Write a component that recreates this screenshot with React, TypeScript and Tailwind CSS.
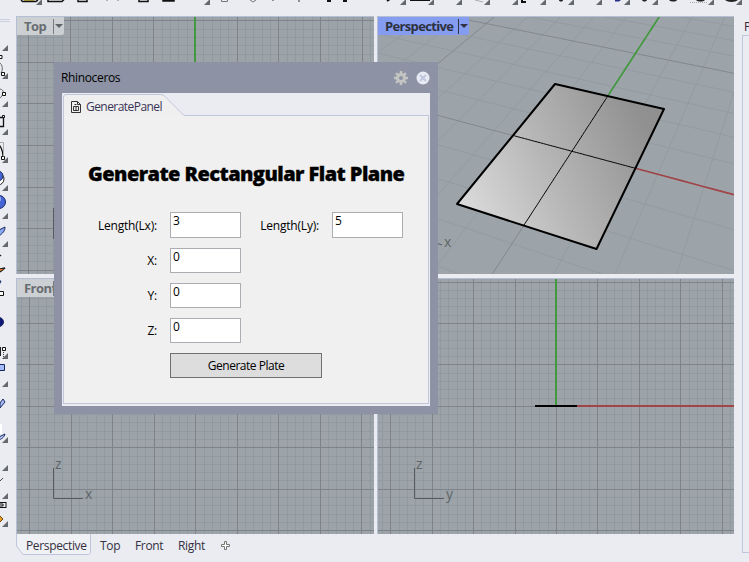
import React from "react";

const FONT = "font-['Open_Sans','Noto_Sans',sans-serif]";

/* ---------- orthographic grids ---------- */

type GridProps = { x0: number; y0: number; width: number; height: number; stepX?: number; stepY?: number };

// x0 / y0: position of one major line inside the viewport; five minor cells per major cell
function Grid({ x0, y0, width, height, stepX = 41.43, stepY = 41.43 }: GridProps) {
  const lines: React.ReactNode[] = [];
  const draw = (major: boolean) => {
    for (let i = -50; i < 100; i++) {
      if ((i % 5 === 0) !== major) continue;
      const x = Math.round(x0 + (i * stepX) / 5);
      const y = Math.round(y0 + (i * stepY) / 5);
      const fill = major ? "#7d8388" : "#92999f";
      if (x >= 0 && x < width) lines.push(<rect key={"x" + i} x={x} y={0} width={1} height={height} fill={fill} />);
      if (y >= 0 && y < height) lines.push(<rect key={"y" + i} x={0} y={y} width={width} height={1} fill={fill} />);
    }
  };
  draw(false);
  draw(true);
  return <g>{lines}</g>;
}

function AxisIcon({ x, y, up, right }: { x: number; y: number; up: string; right: string }) {
  return (
    <g fill="#5f6468" fontFamily="Open Sans, sans-serif" fontSize="14">
      <path d={`M${x + 0.5} ${y - 30}V${y + 0.5}H${x + 30}`} fill="none" stroke="#565b5f" />
      <text x={x + 2} y={y - 29}>{up}</text>
      <text x={x + 32} y={y + 1}>{right}</text>
    </g>
  );
}

/* ---------- perspective view ---------- */

type Pt = [number, number];
const corners: Pt[] = [[178, 68], [287, 93], [219.5, 233], [80, 188]];

// Projective map of the unit square onto the four corners
function project(u: number, v: number): [number, number, number] {
  const [[ax, ay], [bx, by], [cx, cy], [dx, dy]] = corners;
  const dx1 = bx - cx, dx2 = dx - cx, dx3 = ax - bx + cx - dx;
  const dy1 = by - cy, dy2 = dy - cy, dy3 = ay - by + cy - dy;
  const det = dx1 * dy2 - dx2 * dy1;
  const g = (dx3 * dy2 - dx2 * dy3) / det;
  const h = (dx1 * dy3 - dx3 * dy1) / det;
  const w = g * u + h * v + 1;
  return [
    ((bx - ax + g * bx) * u + (dx - ax + h * dx) * v + ax) / w,
    ((by - ay + g * by) * u + (dy - ay + h * dy) * v + ay) / w,
    w,
  ];
}

const world = (x: number, y: number) => project((x + 1.5) / 3, (2.5 - y) / 5);

function worldPath(x1: number, y1: number, x2: number, y2: number) {
  let d = "";
  for (let i = 0; i <= 80; i++) {
    const t = i / 80;
    const [px, py, w] = world(x1 + (x2 - x1) * t, y1 + (y2 - y1) * t);
    if (w > 0.1) d += `${d ? "L" : "M"}${px.toFixed(1)} ${py.toFixed(1)}`;
  }
  return d;
}

function PerspectiveDrawing() {
  const lines: React.ReactNode[] = [];
  for (let i = -20; i <= 20; i++) {
    const stroke = i % 5 === 0 ? "#7b8287" : "#91999e";
    lines.push(<path key={"a" + i} d={worldPath(i, -20, i, 20)} stroke={stroke} />);
    lines.push(<path key={"b" + i} d={worldPath(-20, i, 20, i)} stroke={stroke} />);
  }
  return (
    <svg width="358" height="259" className="-ml-px -mt-px block">
      <defs>
        <linearGradient id="plate" gradientUnits="userSpaceOnUse" x1="90" y1="195" x2="270" y2="110">
          <stop offset="0" stopColor="#dadada" />
          <stop offset="0.45" stopColor="#b7b7b7" />
          <stop offset="1" stopColor="#909090" />
        </linearGradient>
      </defs>
      <g fill="none" strokeWidth="0.8">{lines}</g>
      <path d={worldPath(0, 0, 0, 20)} stroke="#43993f" strokeWidth="1.7" fill="none" />
      <path d={worldPath(0, 0, 20, 0)} stroke="#a14549" strokeWidth="1.7" fill="none" />
      <polygon points={corners.map((c) => c.join(",")).join(" ")} fill="url(#plate)" stroke="#000" strokeWidth="2" strokeLinejoin="round" />
      <path d={worldPath(0, -2.5, 0, 2.5) + worldPath(-1.5, 0, 1.5, 0)} stroke="#000" strokeWidth="1" fill="none" />
      <path d="M59 227l6 2" stroke="#565b5f" />
      <text x="67" y="231" fill="#5f6468" fontFamily="Open Sans, sans-serif" fontSize="14">x</text>
    </svg>
  );
}

/* ---------- viewports ---------- */

function ViewLabel({ text, active }: { text: string; active?: boolean }) {
  return (
    <div
      className={`absolute left-0 top-0 flex h-[18px] items-center rounded-br-[2px] pl-[7px] text-[13px] leading-[18px] ${
        active ? "w-[91px] bg-[#859df0] font-bold tracking-[-0.65px] text-[#2d3140]" : "w-[47px] bg-[#cdd0d3] font-bold tracking-[-0.55px] text-[#686d72]"
      }`}
    >
      <span className="w-0 flex-1 whitespace-nowrap">{text}</span>
      <span className={`h-[15px] w-px ${active ? "bg-[#2d3140]" : "bg-[#777c82]"}`} />
      <svg width="10" height="8" className="block">
        <path d="M1 2h8l-4 4z" fill={active ? "#2d3140" : "#5f6468"} />
      </svg>
    </div>
  );
}

function Viewport({ label, active, children }: { label?: string; active?: boolean; children: React.ReactNode }) {
  return (
    <div className="relative overflow-hidden border-l border-t border-[#b4bfd6] bg-[#9da4a9]">
      {children}
      {label && <ViewLabel text={label} active={active} />}
    </div>
  );
}

/* ---------- clipped tool bars ---------- */

const topMarks = [42, 210, 406, 434, 462, 490, 518, 546, 574, 602, 630, 658, 714, 742];
const leftMarks = [51, 79, 107, 135, 163, 191, 219, 247, 359, 387, 443, 471, 499, 527];

function TopToolbar() {
  return (
    <svg width="749" height="16" className="block h-4 shrink-0">
      <path d="M24 0h10" stroke="#c9b440" strokeWidth="2" />
      <path d="M21 0l1.500 1.500H36l2-1.500M48 0v1.500h14l2-2M78 0v1.500h9v-2M139 0v1.500h9v-2M163 0h11v1h-11z" fill="none" stroke="#111" strokeWidth="1.500" />
      <path d="M107 0v1M118 0v1M221.500 0v1.500h6V0M250 0l3 2 3-2" fill="none" stroke="#777" />
      <path d="M273 0v1M299 0v2" fill="none" stroke="#333" />
      <path d="M328 0v1h3M346 0v1h-3M410 0h20M522 0v2h4M387 1l3-2" fill="none" stroke="#111" strokeWidth="2" />
      <path d="M475 0l8 2" stroke="#aaa" />
      <path d="M615 0h6l-2 1.500h-4z" fill="#26318c" />
      <path d="M690 2.500h18" stroke="#aaa" strokeDasharray="1 1" />
      <path d="M559 0c0 2 4 2 4 0M642 0c1 2 4 2 5 0M669 0c2 2 7 2 8 0M725 0c3 2.500 10 2.500 13 0M696 0c2 2 7 2 9 0" fill="#222" />
      {topMarks.map((x) => <path key={x} d={`M${x} -1v6h-6z`} fill="#65686c" />)}
    </svg>
  );
}

function LeftToolbar() {
  return (
    <svg width="16" height="546" viewBox="0 16 16 546" className="block shrink-0">
      <path d="M0 19.500h10M0 21.500h10" stroke="#ccd0de" />
      {leftMarks.map((y) => <path key={y} d={`M8 ${y - 6}v6h-6z`} fill="#65686c" />)}
      <g fill="#fff" stroke="#111">
        <path d="M-1 55.500h3v3h-3M-1 291.500h4.500v4h-4.500M2.500 347.500h3v3h-3z" />
        <path d="M-1 62c4 3 4 8 2 11M-1 89c4 0 5 3 4 5s-3 5-5 5" fill="none" stroke="#666" />
        <path d="M1.500 72.500h3v3h-3zM2.500 92.500h3v3h-3z" />
        <path d="M-1 117.500h4.500v9h-4.500M-1 145c3 3 4 8 4 13" fill="none" strokeWidth="1.300" />
        <path d="M2.500 115.500h2v2h-2zM1.500 156.500h3v3h-3z" />
        <path d="M0 502.500h6M0 507.500h6M6 502v6M0 504h3v2h-3" fill="none" />
      </g>
      <path d="M-1 142.500h4.500v14" fill="none" stroke="#aaa" />
      <circle cx="-2" cy="179" r="6" fill="#fff" stroke="#222" />
      <g fill="#4565d5" stroke="#182760">
        <circle cx="-2" cy="176" r="5" />
        <circle cx="-1" cy="202" r="6.500" />
        <path d="M-1 230l6-3c0 4-2 6-6 9z" fill="#89a9f2" />
        <path d="M-1 281h2l-2 4z" />
        <circle cx="-1" cy="322" r="4.500" fill="#101878" />
        <path d="M-1 364.500h5.500v6h-5.500z" fill="#a5baf8" />
        <path d="M0 403l3-4 2 3-5 6z" fill="#a5baf8" />
        <path d="M-1 437l6-3c-1 3-2 4-6 6z" fill="#b9c8fa" />
      </g>
      <circle cx="-2" cy="199" r="3" fill="#9db4fa" />
      <path d="M0 424h2v10h-2z" fill="#fff" />
      <path d="M0 256l1-1M0 269l5-1-5 4" fill="none" stroke="#222" strokeWidth="1.500" />
      <path d="M0 269h4l-4 2z" fill="#e36f1e" />
      <path d="M0 347v9" stroke="#222" strokeWidth="2" />
      <path d="M3.500 352v8" stroke="#444" strokeDasharray="1 1" />
      <path d="M0 481l3-3" stroke="#444" fill="none" />
      <path d="M-1 515l4 4-4 4z" fill="#e59a19" stroke="#704a0c" />
    </svg>
  );
}

/* ---------- floating panel ---------- */

function Field({ label, value, tall }: { label: string; value: string; tall?: boolean }) {
  return (
    <>
      <label className="self-center pr-[13px] text-right">{label}</label>
      <div className={`w-[71px] border border-[#abadb3] bg-white pl-[2px] leading-[15px] ${tall ? "h-[26px]" : "h-[25px]"}`}>
        {value}
      </div>
    </>
  );
}

function Panel() {
  return (
    <section className="absolute left-[54px] top-[62px] flex h-[352px] w-[384px] flex-col bg-[#8d93a4] px-2 pb-2 text-[12px] tracking-[-0.2px] text-black">
      <header className="flex h-[31px] items-center justify-between">
        <span className="-ml-px text-[12px] tracking-[-0.35px]">Rhinoceros</span>
        <div className="flex items-center gap-[8px]">
          <svg width="14" height="14" viewBox="-7 -7 14 14">
            {[0, 45, 90, 135].map((a) => (
              <rect key={a} x="-1.250" y="-7" width="2.500" height="14" fill="#c4c4c2" transform={`rotate(${a})`} />
            ))}
            <circle r="3.500" fill="none" stroke="#c4c4c2" strokeWidth="3" />
            <circle r="2" fill="#8d93a4" />
          </svg>
          <svg width="14" height="14" viewBox="0 0 14 14">
            <circle cx="7" cy="7" r="6.500" fill="#e8ebf4" />
            <path d="M4 4l6 6M10 4l-6 6" stroke="#c0c7dc" strokeWidth="2" />
          </svg>
        </div>
      </header>
      <div className="flex h-[313px] flex-col bg-[#eaecf1] px-px pb-[2px]">
        <div className="relative h-[22px] shrink-0">
          <svg width="366" height="23" className="absolute left-0 top-0">
            <path d="M0.500 23V4Q0.500 1.500 3 1.500H98Q100 1.500 102 3.500L121 22.500H366V23z" fill="#efeff0" />
            <path d="M0.500 23V4Q0.500 1.500 3 1.500H98Q100 1.500 102 3.500L121 22.500H366" fill="none" stroke="#bfc6dc" />
          </svg>
          <div className="relative flex h-full items-center gap-[5px] pl-[8px] pt-[5px] text-[#3a3557]">
            <svg width="10" height="12" fill="none" stroke="#333" className="block">
              <path d="M0.500 0.500h6l3 3v8h-9zM6.500 0.500v3h3M2.500 5.500h5v4h-5zM5 5v5M3.500 3.500h2" />
            </svg>
            <span className="tracking-[-0.55px]">GeneratePanel</span>
          </div>
        </div>
        <div className="flex-1 border-x border-b border-[#bfc6dc] bg-[#f0f0f0]">
          <h1 className="mt-[45px] ml-[24px] w-[316px] whitespace-nowrap text-[20px] font-extrabold leading-[28px] tracking-[-0.56px] [-webkit-text-stroke:0.3px_#000]">
            Generate Rectangular Flat Plane
          </h1>
          <div className="mt-[24px] grid grid-cols-[106px_71px_91px_71px] gap-y-[10px] leading-[17px]">
            <Field label="Length(Lx):" value="3" tall />
            <Field label="Length(Ly):" value="5" tall />
            <Field label="X:" value="0" />
            <span className="col-span-2" />
            <Field label="Y:" value="0" />
            <span className="col-span-2" />
            <Field label="Z:" value="0" />
          </div>
          <button className="ml-[106px] mt-[10px] block h-[25px] w-[152px] border border-[#707070] bg-[#dddddd] text-center leading-[23px] tracking-[-0.48px]">
            Generate Plate
          </button>
        </div>
      </div>
    </section>
  );
}

/* ---------- bottom tabs ---------- */

function ViewTabs() {
  return (
    <nav className="flex h-7 text-[12px] tracking-[-0.35px] text-[#333042]">
      <div className="relative h-[21px] w-[75px]">
        <svg width="75" height="21" className="absolute left-0 top-0">
          <path d="M0.500 0V12L7 20.500H72Q74.500 20.500 74.500 18V0" fill="#f0f1f4" stroke="#bfc6dc" />
        </svg>
        <span className="relative block pl-[10px] leading-[23px]">Perspective</span>
      </div>
      <span className="ml-[9px] w-[35px] leading-[23px]">Top</span>
      <span className="w-[43px] leading-[23px]">Front</span>
      <span className="w-[43px] leading-[23px]">Right</span>
      <svg width="10" height="10" className="mt-[7px]">
        <path d="M3.500 0.500h2v3h3v2h-3v3h-2v-3h-3v-2h3z" fill="#fff" stroke="#777" />
      </svg>
    </nav>
  );
}

export default function App() {
  return (
    <div className={`relative flex h-[562px] w-[749px] flex-col overflow-hidden bg-[#eaecf1] ${FONT}`}>
      <TopToolbar />
      <div className="flex">
        <LeftToolbar />
        <main className="w-[718px]">
          <div className="grid grid-cols-[358px_357px] grid-rows-[258px_256px] gap-x-[3px] gap-y-1">
            <Viewport label="Top">
              <svg width="359" height="259" className="-ml-px -mt-px block">
                <Grid x0={12.2} y0={4.3} width={359} height={259} stepX={41.7} stepY={41.55} />
                <rect x="178" width="2" height="258" fill="#43993f" />
                <path d="M37.500 192v31" stroke="#565b5f" />
              </svg>
            </Viewport>
            <Viewport label="Perspective" active>
              <PerspectiveDrawing />
            </Viewport>
            <Viewport label="Front">
              <svg width="359" height="257" className="-ml-px -mt-px block">
                <Grid x0={13.2} y0={3.6} width={359} height={257} stepX={41.5} />
                <AxisIcon x={37} y={220} up="z" right="x" />
              </svg>
            </Viewport>
            <Viewport>
              <svg width="358" height="257" className="-ml-px -mt-px block">
                <Grid x0={13.3} y0={3.6} width={358} height={257} />
                <rect x="178" width="2" height="127" fill="#43993f" />
                <rect x="200" y="127" width="160" height="2" fill="#a14549" />
                <rect x="158" y="127" width="42" height="2" fill="#000" />
                <AxisIcon x={37} y={220} up="z" right="y" />
              </svg>
            </Viewport>
          </div>
          <ViewTabs />
        </main>
        <aside className="w-[15px] pl-2">
          <div className="h-[19px] overflow-hidden whitespace-nowrap pl-[2px] text-[12px] leading-[21px] text-[#3a2337]">P</div>
          <div className="h-[518px] border-y border-l border-[#bfc6dc]" />
        </aside>
      </div>
      <Panel />
    </div>
  );
}
